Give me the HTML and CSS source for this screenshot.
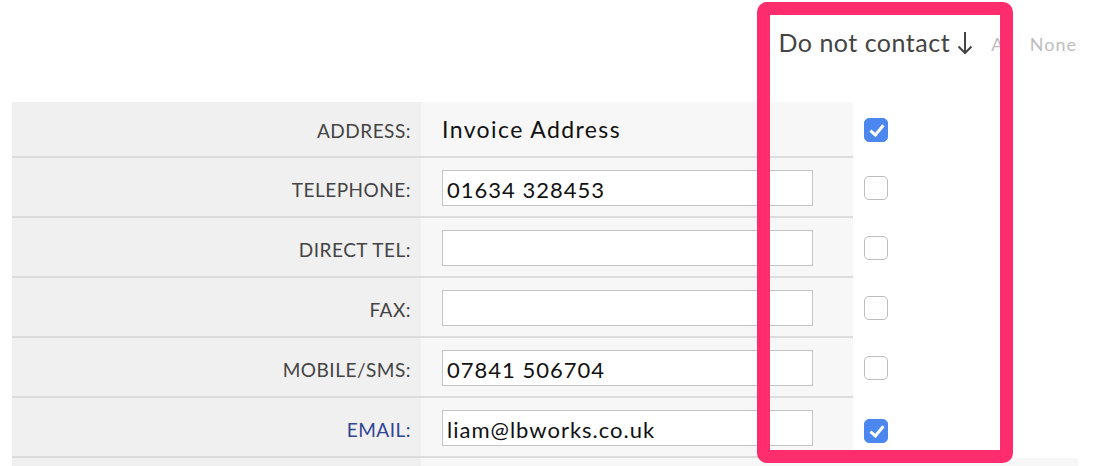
FILE: index.html
```html
<!DOCTYPE html>
<html lang="en">
<head>
  <meta charset="UTF-8" />
  <title>Contact details</title>
  <link rel="stylesheet" href="styles.css">
</head>
<body>
  <div class="page">
    <div class="contact-head">
      <span class="head-title">Do not contact</span>
      <svg class="arrow" width="16" height="24" viewBox="0 0 16 24">
        <path d="M8 1 V22 M1.5 15.5 L8 22 L14.5 15.5" fill="none" stroke="#444" stroke-width="2" />
      </svg>
      <span class="head-link link-all">All</span>
      <span class="head-link">None</span>
    </div>

    <div class="contact-table">
      <div class="row row-first">
        <div class="cell-label">Address:</div>
        <div class="cell-value"><span class="plain">Invoice Address</span></div>
        <div class="cell-check"><input type="checkbox" checked /></div>
      </div>
      <div class="row">
        <div class="cell-label">Telephone:</div>
        <div class="cell-value"><input type="text" value="01634 328453" /></div>
        <div class="cell-check"><input type="checkbox" /></div>
      </div>
      <div class="row">
        <div class="cell-label">Direct Tel:</div>
        <div class="cell-value"><input type="text" value="" /></div>
        <div class="cell-check"><input type="checkbox" /></div>
      </div>
      <div class="row">
        <div class="cell-label">Fax:</div>
        <div class="cell-value"><input type="text" value="" /></div>
        <div class="cell-check"><input type="checkbox" /></div>
      </div>
      <div class="row">
        <div class="cell-label">Mobile/SMS:</div>
        <div class="cell-value"><input type="text" value="07841 506704" /></div>
        <div class="cell-check"><input type="checkbox" /></div>
      </div>
      <div class="row">
        <div class="cell-label label-link">Email:</div>
        <div class="cell-value"><input type="text" value="liam@lbworks.co.uk" /></div>
        <div class="cell-check check-low"><input type="checkbox" checked /></div>
      </div>
      <div class="row-more">
        <div class="more-label"></div>
        <div class="more-rest"></div>
      </div>
    </div>

    <div class="highlight"></div>
  </div>
</body>
</html>
```

FILE: styles.css
```css
body {
  margin: 0;
  font-family: Lato, "Open Sans", sans-serif;
  background: #fff;
  color: #444;
}

.page {
  position: relative;
  width: 1066px;
  padding-left: 12px;
  height: 466px;
  overflow: hidden;
}

.contact-head {
  display: flex;
  justify-content: flex-end;
  align-items: center;
  height: 102px;
  padding-bottom: 18px;
  box-sizing: border-box;
  padding-right: 1px;
}

.head-title {
  font-size: 25px;
  letter-spacing: 0.5px;
  color: #444;
  margin-right: 7px;
}

.arrow {
  display: block;
  margin-top: 2px;
  margin-right: 18px;
}

.head-link {
  font-size: 18px;
  letter-spacing: 1px;
  color: #bdbdbd;
  margin-top: 3px;
}

.link-all {
  margin-right: 15px;
}

.row {
  display: grid;
  grid-template-columns: 409px 432px 1fr;
  height: 60px;
}

.row-first {
  height: 56px;
}

.cell-label,
.cell-value {
  border-bottom: 2px solid #dcdcdc;
  display: flex;
  align-items: center;
}

.cell-label {
  background: #f0f0f0;
  justify-content: flex-end;
  padding-right: 10px;
  padding-top: 5px;
  text-transform: uppercase;
  font-size: 19px;
  letter-spacing: 0.5px;
  color: #444;
}

.row-first .cell-label {
  padding-top: 2px;
}

.label-link {
  color: #2f4596;
}

.cell-value {
  background: #f7f7f7;
  padding-left: 21px;
}

.plain {
  font-size: 23px;
  letter-spacing: 1.4px;
  color: #111;
}

.cell-value input {
  width: 371px;
  height: 36px;
  box-sizing: border-box;
  border: 1px solid #c4c4c4;
  background: #fff;
  font-family: Lato, sans-serif;
  font-size: 22px;
  letter-spacing: 1px;
  color: #111;
  padding: 3px 4px 0;
  margin: 0;
  margin-top: 1px;
}

.cell-check {
  display: flex;
  align-items: center;
  padding-left: 11px;
}

.check-low {
  padding-top: 5px;
}

.cell-check input {
  appearance: none;
  -webkit-appearance: none;
  width: 24px;
  height: 24px;
  margin: 0;
  border: 1px solid #bcbcbc;
  border-radius: 5px;
  background: #fff;
  position: relative;
}

.cell-check input:checked {
  background: #4b87ee;
  border-color: #4b87ee;
}

.cell-check input:checked::after {
  content: "";
  position: absolute;
  left: 8px;
  top: 3px;
  width: 5px;
  height: 11px;
  border: solid #fff;
  border-width: 0 3px 3px 0;
  transform: rotate(40deg);
}

.row-more {
  display: grid;
  grid-template-columns: 409px 1fr;
  height: 10px;
}

.more-label {
  background: #f0f0f0;
}

.more-rest {
  background: #f7f7f7;
}

.highlight {
  position: absolute;
  left: 757px;
  top: 2px;
  width: 256px;
  height: 461px;
  box-sizing: border-box;
  border: 13px solid #ff2d6d;
  border-radius: 10px;
}
```
